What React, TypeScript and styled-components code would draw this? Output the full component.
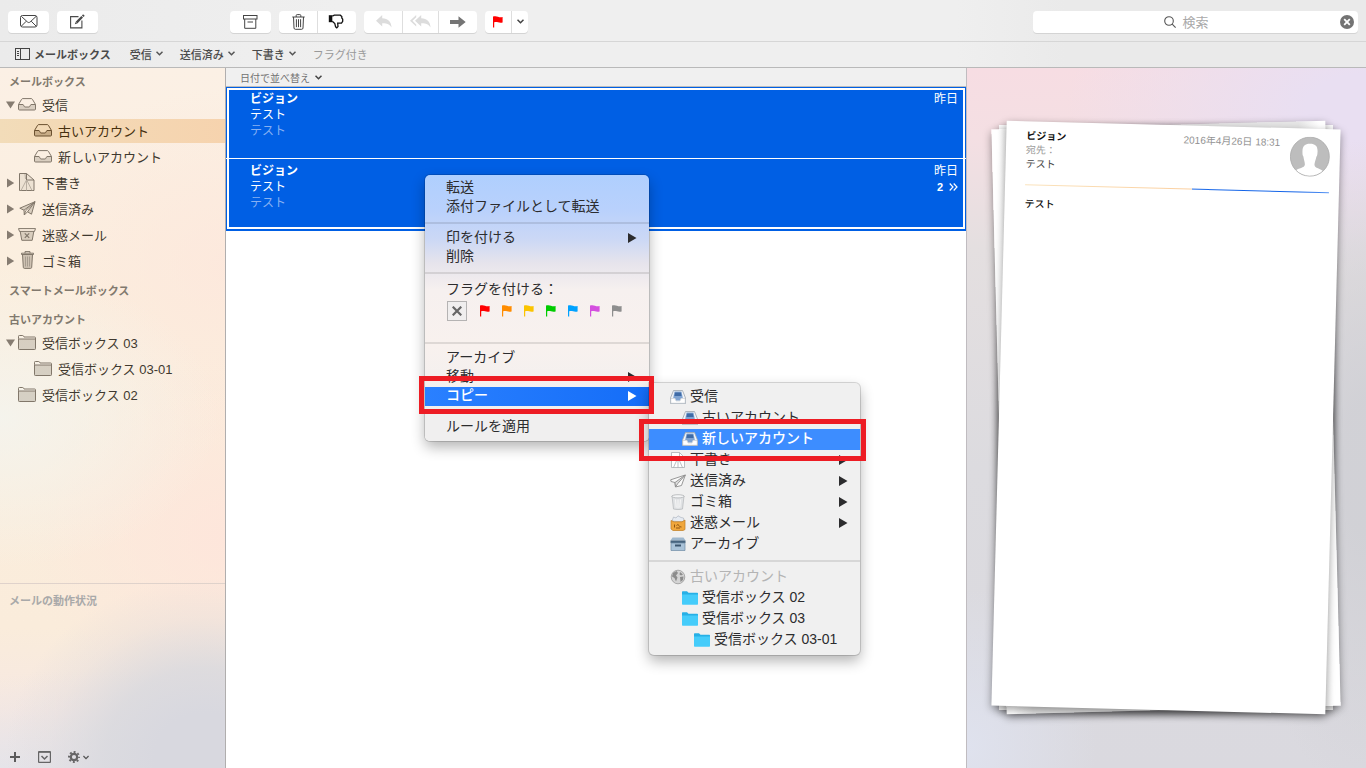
import React from 'react';
import styled, { createGlobalStyle, css } from 'styled-components';

const GlobalStyle = createGlobalStyle`
  *, *::before, *::after { box-sizing: border-box; }
  body {
    margin: 0;
    font-family: "Liberation Sans", "Noto Sans CJK JP", sans-serif;
    font-size: 13px;
    color: #333;
  }
  button {
    margin: 0;
    padding: 0;
    border: 0;
    background: none;
    font: inherit;
    color: inherit;
    text-align: left;
    white-space: nowrap;
  }
  ul { margin: 0; padding: 0; list-style: none; }
  svg { display: block; flex: none; }
`;

/* ---------- window ---------- */

const Window = styled.div`
  position: relative;
  display: flex;
  flex-direction: column;
  min-height: 100vh;
  overflow: hidden;
  background: #fff;
`;

const Toolbar = styled.header`
  display: flex;
  align-items: center;
  height: 42px;
  padding: 2px 8px 0;
  gap: 8px;
  background: linear-gradient(90deg, #ebebeb, #efefef 25%, #efefef 70%, #eaeaea 78%);
  border-bottom: 1px solid #d6d6d6;
`;

const ToolGroup = styled.div<{ $push?: number }>`
  display: flex;
  height: 22px;
  margin-left: ${(p) => p.$push ?? 0}px;
  background: #fff;
  border-radius: 4px;
  box-shadow: 0 1px 0 #d4d4d4;
`;

const ToolButton = styled.button<{ $w: number }>`
  display: flex;
  align-items: center;
  justify-content: center;
  width: ${(p) => p.$w}px;
  & + & { border-left: 1px solid #dedede; }
`;

const Search = styled.form`
  display: flex;
  align-items: center;
  justify-content: center;
  width: 325px;
  height: 22px;
  margin-left: auto;
  padding-right: 4px;
  background: #fff;
  border-radius: 4px;
  box-shadow: 0 1px 0 #d4d4d4;
`;

const SearchLabel = styled.label`
  display: flex;
  flex: 1;
  align-items: center;
  justify-content: center;
  gap: 6px;
`;

const SearchInput = styled.input`
  field-sizing: content;
  width: auto;
  min-width: 26px;
  height: 20px;
  padding: 0;
  border: 0;
  outline: 0;
  background: transparent;
  font: inherit;
  &::placeholder { color: #a9a9a9; opacity: 1; }
`;

const FavoritesBar = styled.nav`
  display: flex;
  align-items: center;
  height: 26px;
  padding: 0 15px 2px;
  background: linear-gradient(90deg, #ebebeb, #efefef 25%, #efefef 70%, #eaeaea 78%);
  border-bottom: 1px solid #b9b9b9;
  font-size: 11px;
`;

const Favorite = styled.button<{ $muted?: boolean; $strong?: boolean }>`
  display: flex;
  align-items: center;
  gap: 4px;
  margin-right: ${(p) => (p.$strong ? 19 : 17)}px;
  color: ${(p) => (p.$muted ? '#999' : '#4a4a4a')};
  font-weight: ${(p) => (p.$strong ? 700 : p.$muted ? 400 : 500)};
`;

const Columns = styled.div`
  display: flex;
  flex: 1;
`;

/* ---------- sidebar ---------- */

const Sidebar = styled.aside`
  display: flex;
  flex: none;
  flex-direction: column;
  width: 226px;
  border-right: 1px solid #b0aeae;
  background:
    radial-gradient(ellipse 200px 180px at 205px 690px, rgba(216, 216, 223, 1) 25%, rgba(217, 217, 222, 0.85) 50%, rgba(222, 218, 220, 0.3) 78%, rgba(226, 220, 220, 0) 100%),
    radial-gradient(ellipse 240px 130px at 90px 730px, rgba(226, 226, 232, 0.9), rgba(226, 226, 232, 0) 100%),
    radial-gradient(ellipse 220px 150px at 0 350px, rgba(244, 244, 238, 0.9), rgba(246, 244, 240, 0) 100%),
    radial-gradient(ellipse 200px 180px at 226px 470px, rgba(254, 229, 219, 0.9), rgba(253, 231, 220, 0) 100%),
    radial-gradient(ellipse 200px 180px at 226px 200px, rgba(253, 231, 220, 0.8), rgba(253, 231, 220, 0) 100%),
    linear-gradient(180deg, #fbf0e5, #fbeedd 35%, #faecdb 80%, #f6e8e2 92%, #e9e6ea);
`;

const SidebarBody = styled.div`
  flex: 1;
  padding-top: 3px;
`;

const SidebarSection = styled.section`
  & + & { margin-top: 7px; }
`;

const SectionTitle = styled.h2<{ $dim?: boolean }>`
  margin: 0;
  padding-left: 9px;
  font-size: 11px;
  font-weight: 700;
  line-height: 22px;
  color: ${(p) => (p.$dim ? '#a9a9a9' : '#81796e')};
`;

const MailboxList = styled.ul`
  display: flex;
  flex-direction: column;
  gap: 2px;
`;

const MailboxRow = styled.button<{ $nested?: boolean; $selected?: boolean }>`
  display: flex;
  align-items: center;
  width: 100%;
  height: 24px;
  padding: 0 0 2px ${(p) => (p.$nested ? 22 : 6)}px;
  color: ${(p) => (p.$selected ? '#46300f' : '#3f392f')};
  background: ${(p) => (p.$selected ? 'linear-gradient(90deg, #f2dcb9, #f6d3ae)' : 'none')};
`;

const Disclosure = styled.span`
  width: 12px;
  padding-top: 2px;
`;

const MailboxIcon = styled.span`
  display: flex;
  justify-content: center;
  width: 18px;
  margin-right: 6px;
`;

const StatusPane = styled.footer`
  display: flex;
  flex-direction: column;
  justify-content: space-between;
  height: 185px;
  padding-top: 6px;
  border-top: 1px solid #dfd2cb;
`;

const StatusActions = styled.div`
  display: flex;
  align-items: center;
  height: 22px;
  padding-left: 10px;
  gap: 17px;
`;

const StatusButton = styled.button`
  display: flex;
  align-items: center;
  gap: 3px;
`;

/* ---------- message list ---------- */

const MessagePane = styled.main`
  flex: 1;
  min-width: 0;
  background: #fff;
`;

const SortBar = styled.div`
  display: flex;
  align-items: center;
  height: 19px;
  padding-left: 14px;
  background: #f0f0f0;
  border-bottom: 1px solid #bdbdbd;
`;

const SortButton = styled.button`
  display: flex;
  align-items: center;
  gap: 5px;
  font-size: 10px;
  color: #707070;
`;

const MessageList = styled.ul`
  position: relative;
  background: #005fe4;
  &::after {
    content: "";
    position: absolute;
    inset: 1px 1px 2px;
    border: 2px solid #fff;
    pointer-events: none;
  }
`;

const Message = styled.li`
  display: flex;
  justify-content: space-between;
  height: 72px;
  padding: 4px 8px 0 24px;
  font-size: 12px;
  line-height: 16px;
  color: #fff;
  &:first-child { border-bottom: 1px solid #fff; }
`;

const MessageLine = styled.div<{ $bold?: boolean; $dim?: boolean }>`
  font-weight: ${(p) => (p.$bold ? 700 : 400)};
  color: ${(p) => (p.$dim ? '#86b0f2' : '#fff')};
`;

const MessageMeta = styled.div`
  text-align: right;
`;

const ThreadCount = styled.button`
  display: inline-flex;
  align-items: center;
  gap: 6px;
  font-size: 11px;
  font-weight: 700;
`;

/* ---------- preview ---------- */

const PreviewPane = styled.section`
  display: grid;
  flex: none;
  width: 400px;
  padding: 57px 33px 58px 32px;
  border-left: 1px solid #c0bcc0;
  background:
    radial-gradient(ellipse 130px 330px at 399px 400px, rgba(208, 208, 213, 0.9) 20%, rgba(210, 210, 214, 0) 100%),
    radial-gradient(ellipse 130px 160px at 0 680px, rgba(223, 226, 238, 1), rgba(223, 226, 238, 0)),
    radial-gradient(ellipse 300px 170px at 399px 40px, rgba(233, 223, 242, 1) 20%, rgba(233, 223, 242, 0) 100%),
    linear-gradient(180deg, #f7dde3 0, #f4dfe3 70px, #e4dfe0 180px, #dcdbdf 400px, #dad9df 100%);
`;

const Sheet = styled.article<{ $turn?: number }>`
  grid-area: 1 / 1;
  padding: 8px 10px 0 20px;
  background: #fff;
  box-shadow: 0 3px 8px rgba(0, 0, 0, 0.4);
  transform: rotate(${(p) => p.$turn ?? 0}deg);
  font-size: 10px;
`;

const BackSheet = styled(Sheet).attrs({ 'aria-hidden': true })`
  background: linear-gradient(90deg, #fff 2%, #e6e6e6 8%, #e6e6e6 92%, #fff 98%);
`;

const SheetHeader = styled.div`
  display: flex;
  height: 56px;
  border-bottom: 1px solid;
  border-image: linear-gradient(90deg, #fae3bd, #fbcf9f 55%, #1565e8 55%, #1565e8 90%, #5b97f4) 1;
`;

const SheetFields = styled.div`
  flex: 1;
  line-height: 14px;
`;

const FieldLine = styled.div<{ $tone: string; $bold?: boolean }>`
  color: ${(p) => p.$tone};
  font-weight: ${(p) => (p.$bold ? 700 : 400)};
`;

const SheetDate = styled.time`
  margin-right: 10px;
  color: #929292;
  line-height: 14px;
`;

const SheetText = styled.p`
  margin: 12px 0 0;
  color: #111;
  font-weight: 500;
  line-height: 14px;
`;

/* ---------- menus ---------- */

const menuSurface = css`
  position: absolute;
  padding: 4px 0;
  font-size: 14px;
  color: #2c2c2e;
  box-shadow: 0 0 0 1px rgba(0, 0, 0, 0.14), 0 6px 14px rgba(0, 0, 0, 0.3);
`;

const ContextMenu = styled.div`
  ${menuSurface}
  left: 425px;
  top: 175px;
  width: 224px;
  border-radius: 5px;
  background: linear-gradient(180deg, #afcffe 0, #b9d1fc 35px, #ccd8f5 65px, #e6e4ec 88px, #f6f0ef 115px, #f8f1ee 170px, #f0efef 240px);
`;

const Submenu = styled.div`
  ${menuSurface}
  left: 649px;
  top: 383px;
  width: 211px;
  border-radius: 0 5px 5px 5px;
  background: #f0f0f0;
`;

const MenuItem = styled.button<{ $on?: boolean; $level?: number; $sub?: boolean; $off?: boolean }>`
  display: flex;
  align-items: center;
  width: 100%;
  height: ${(p) => (p.$sub ? 21 : 19)}px;
  padding: 0 12px 2px ${(p) => 21 + (p.$level ?? 0) * 12}px;
  gap: 4px;
  line-height: 19px;
  ${(p) => p.$off && css`color: #b4b4b4;`}
  ${(p) => p.$on && css`
    color: #fff;
    font-weight: 500;
    background: ${p.$sub ? '#3d8dff' : 'linear-gradient(90deg, #2a80ff, #146df8)'};
  `}
  & > span { flex: 1; }
`;

const MenuRule = styled.hr`
  height: 2px;
  margin: 5px 0;
  border: 0;
  background: rgba(0, 0, 0, 0.1);
`;

const FlagLabel = styled.div`
  height: 22px;
  padding-left: 21px;
  line-height: 20px;
`;

const FlagRow = styled.div`
  display: flex;
  align-items: center;
  height: 36px;
  padding: 0 0 16px 22px;
`;

const NoFlag = styled.button`
  display: flex;
  align-items: center;
  justify-content: center;
  width: 20px;
  height: 20px;
  margin-right: 7px;
  border: 1px solid #b5b3b3;
  background: #f0eeee;
`;

const FlagButton = styled.button`
  display: flex;
  justify-content: center;
  width: 22px;
`;

const Callout = styled.div<{ $x: number; $y: number; $w: number; $h: number }>`
  position: absolute;
  left: ${(p) => p.$x}px;
  top: ${(p) => p.$y}px;
  width: ${(p) => p.$w}px;
  height: ${(p) => p.$h}px;
  border: 5px solid #ed1c24;
  pointer-events: none;
`;

/* ---------- icons ---------- */

const Chevron = ({ color = '#555', w = 7 }: { color?: string; w?: number }) => (
  <svg width={w} height="5" viewBox="0 0 7 5" fill="none" stroke={color} strokeWidth="1.5">
    <path d="M0.5 0.8 3.5 3.8 6.5 0.8" />
  </svg>
);

const Flag = ({ color }: { color: string }) => (
  <svg width="10" height="12" viewBox="0 0 10 12" fill={color}>
    <path d="M0 0.6C2 0 3.5 0.2 5 0.8 6.500 1.400 8 1.500 9.600 1V6.400C8 7 6.500 6.800 5 6.300 3.800 5.900 2.500 5.800 1.200 6.300V11.500H0Z" />
  </svg>
);

const Arrow = ({ color = '#2c2c2e' }: { color?: string }) => (
  <svg width="9" height="10" viewBox="0 0 9 10" fill={color}>
    <path d="M0 0 8.500 5 0 10Z" />
  </svg>
);

const EnvelopeIcon = () => (
  <svg width="18" height="13" viewBox="0 0 18 13" fill="none" stroke="#444" strokeWidth="1">
    <rect x="0.5" y="0.5" width="16.500" height="11.500" rx="2" />
    <path d="M1.500 1.500 7.500 7C8.300 7.700 9.300 7.700 10.100 7L16 1.500M1.500 11 6.300 6.200M16 11 11.200 6.200" />
  </svg>
);

const ComposeIcon = () => (
  <svg width="15" height="15" viewBox="0 0 15 15" fill="none" stroke="#4a4a4a" strokeWidth="1.100">
    <path d="M8.500 2.600H0.600V13.900H11.900V6.500" />
    <path d="M6.500 8.600 12.200 2.700" strokeWidth="2.300" />
    <path d="M12.700 2.200 13.900 1" strokeWidth="2.300" />
    <path d="M4.800 10.300 5.600 7.900 7.200 9.500Z" fill="#4a4a4a" stroke="none" />
  </svg>
);

const ArchiveIcon = () => (
  <svg width="15" height="14" viewBox="0 0 15 14" fill="none" stroke="#444" strokeWidth="1">
    <rect x="0.500" y="0.500" width="13.500" height="3.500" />
    <path d="M1.700 4V13.300H12.800V4M4.500 7H10" />
  </svg>
);

const TrashIcon = () => (
  <svg width="13" height="16" viewBox="0 0 13 16" fill="none" stroke="#444" strokeWidth="1">
    <path d="M0.300 3H12.700M4.200 3V1.500Q4.200 0.600 5.200 0.600H7.800Q8.800 0.600 8.800 1.500V3M1.500 3 2 14Q2.100 15.300 3.300 15.300H9.700Q10.900 15.300 11 14L11.500 3M4.400 5.200V13.200M6.500 5.200V13.200M8.600 5.200V13.200" />
  </svg>
);

const ThumbDownIcon = () => (
  <svg width="18" height="15" viewBox="0 0 18 15" fill="none" stroke="#111" strokeWidth="1.300">
    <path d="M0.800 1.200H4.300V8.200H0.800Z" fill="#111" stroke="none" />
    <path d="M4.300 2.200 6.300 1.200H12.300L13.800 2.600V4L14.700 5.200V7.400L13.500 9.200H9.700L10 12.600 8.800 13.800 7.600 12.800 6.800 9.600 4.300 7.200" />
  </svg>
);

const ReplyIcon = ({ all }: { all?: boolean }) => (
  <svg width={all ? 21 : 18} height="13" viewBox={all ? '-5 0 21 13' : '-2 0 18 13'} fill="#dcdcdc">
    <path d="M0 5.800 6.200 0V3.300C12 3.500 15.200 6.500 15.600 12.600 13.500 9.200 11 8.200 6.200 8.300V11.600Z" />
    {all && <path d="M-5 5.800 1.200 0V2.200L-2.500 5.800 1.200 9.400V11.600Z" />}
  </svg>
);

const ForwardIcon = () => (
  <svg width="16" height="12" viewBox="0 0 16 12" fill="#757575">
    <path d="M0 4H8.500V0.200L15.700 6 8.500 11.800V8H0Z" />
  </svg>
);

const SearchIcon = () => (
  <svg width="12" height="12" viewBox="0 0 12 12" fill="none" stroke="#555" strokeWidth="1.100">
    <circle cx="5" cy="5" r="4.300" />
    <path d="M8.200 8.200 11.600 11.600" />
  </svg>
);

const ClearIcon = () => (
  <svg width="14" height="14" viewBox="0 0 14 14">
    <circle cx="7" cy="7" r="7" fill="#737373" />
    <path d="M4.200 4.200 9.800 9.800M9.800 4.200 4.200 9.800" stroke="#fff" strokeWidth="1.800" />
  </svg>
);

const PanelIcon = () => (
  <svg width="15" height="12" viewBox="0 0 15 12" fill="none" stroke="#444" strokeWidth="1">
    <rect x="0.500" y="0.500" width="14" height="11" />
    <path d="M5.500 0.500V11.500M2 3.500H4M2 5.500H4M2 7.500H4" />
  </svg>
);

const Triangle = ({ open }: { open?: boolean }) => (
  <svg width="10" height="10" viewBox="0 0 10 10" fill="#867c71">
    <path d={open ? 'M0 1.500H9L4.500 8.500Z' : 'M1 0.500 8.200 5 1 9.500Z'} />
  </svg>
);

const line = '#81776a';
const shade = 'rgba(140, 128, 112, 0.3)';

const InboxIcon = ({ dark }: { dark?: boolean }) => (
  <svg width="18" height="13" viewBox="0 0 18 13" fill="none" stroke={dark ? '#6b5130' : line} strokeWidth="1">
    <path
      d="M0.500 6.500H5C5.800 6.500 5.800 9 7 9H11C12.200 9 12.200 6.500 13 6.500H17.500V11Q17.500 12 16.500 12H1.500Q0.500 12 0.500 11Z"
      fill={dark ? 'rgba(120, 90, 50, 0.35)' : shade}
    />
    <path d="M0.500 6.500 3.600 1.300Q4 0.600 4.800 0.600H13.200Q14 0.600 14.400 1.300L17.500 6.500" />
  </svg>
);

const DraftIcon = () => (
  <svg width="16" height="18" viewBox="0 0 16 18" fill="none" stroke={line} strokeWidth="1">
    <path d="M0.500 0.500H7.500L15 7V17.500H0.500Z" fill="rgba(140, 128, 112, 0.12)" />
    <path d="M7.500 0.500V7H15" />
    <path d="M7.500 7 2 17.500M7.500 7V17.500M8 7.500 13 17.500M6 1 6.500 6" stroke="#b9afa2" />
  </svg>
);

const PlaneIcon = () => (
  <svg width="17" height="15" viewBox="0 0 17 15" fill="none" stroke={line} strokeWidth="1" strokeLinejoin="round">
    <path d="M16 0.700 0.800 7.200 5 9.200 16 0.700 12.500 13.200 8.500 10.800 16 0.700" fill={shade} />
    <path d="M5 9.200 5.300 14 8.500 10.800M5.300 14 6.500 9.900 16 0.700" />
  </svg>
);

const JunkIcon = () => (
  <svg width="18" height="13" viewBox="0 0 18 13" fill="none" stroke={line} strokeWidth="1">
    <path d="M0.500 0.600H17.500L16.500 3.400H1.500Z" />
    <path d="M2.200 3.400 3.800 12.300H14.200L15.800 3.400" fill={shade} />
    <path d="M6.800 5.400 11.200 9.800M11.200 5.400 6.800 9.800" strokeWidth="1.200" />
  </svg>
);

const BinIcon = () => (
  <svg width="13" height="18" viewBox="0 0 13 18" fill="none" stroke={line} strokeWidth="1">
    <path d="M1.500 3.500 2.300 16.300Q2.400 17.400 3.500 17.400H9.500Q10.600 17.400 10.700 16.300L11.500 3.500" fill="rgba(140, 128, 112, 0.4)" />
    <path d="M0.500 3.500V2.200H12.500V3.500ZM4 2.200V0.600H9V2.200" />
    <path d="M4.500 5.500V15.500M6.500 5.500V15.500M8.500 5.500V15.500" stroke="#a79d90" />
  </svg>
);

const FolderIcon = () => (
  <svg width="18" height="15" viewBox="0 0 18 15" fill="none" stroke={line} strokeWidth="1">
    <path d="M0.500 3.800V1.300Q0.500 0.500 1.300 0.500H4.700Q5.300 0.500 5.600 1.200L6 2H16.700Q17.500 2 17.500 2.800V4" />
    <path d="M0.500 4H17.500V13.700Q17.500 14.500 16.700 14.500H1.300Q0.500 14.500 0.500 13.700Z" fill={shade} />
  </svg>
);

const PlusIcon = () => (
  <svg width="11" height="11" viewBox="0 0 11 11" stroke="#5c5b5c" strokeWidth="2">
    <path d="M5 0V10M0 5H10" />
  </svg>
);

const ActivityIcon = () => (
  <svg width="13" height="12" viewBox="0 0 13 12" fill="none" stroke="#666566" strokeWidth="1.200">
    <rect x="0.600" y="0.600" width="11.800" height="10.800" rx="0.500" />
    <path d="M0.600 1.200H12.400" />
    <path d="M3.500 5 6.500 8 9.500 5" strokeWidth="1.500" />
  </svg>
);

const GearIcon = () => (
  <svg width="12" height="12" viewBox="0 0 12 12" fill="none" stroke="#666566">
    <circle cx="6" cy="6" r="3.200" strokeWidth="2.200" />
    <circle cx="6" cy="6" r="5" strokeWidth="2" strokeDasharray="1.900 2.027" strokeDashoffset="0.950" />
  </svg>
);

const TrayIcon = () => (
  <svg width="16" height="16" viewBox="0 0 16 16">
    <path d="M3.500 1.500H12.500L15.500 9V14.500H0.500V9Z" fill="#f2f4f7" stroke="#9aa3ad" strokeWidth="0.800" />
    <path d="M4.500 2.500H11.500L12.800 9H11L10 11.500H6L5 9H3.200Z" fill="#7fa3d1" />
    <path d="M5.200 3.500H10.800L11.600 7H4.400Z" fill="#3f6ba6" />
    <path d="M0.800 9.500H4.800L6 12H10L11.200 9.500H15.200V14.200H0.800Z" fill="#fff" stroke="#b7bec6" strokeWidth="0.500" />
  </svg>
);

const MenuDraftIcon = () => (
  <svg width="16" height="16" viewBox="0 0 16 16" stroke="#a9aeb4" strokeWidth="0.800" fill="none">
    <path d="M1.500 0.500H9.500L14.500 5.500V15.500H1.500Z" fill="#fff" />
    <path d="M9.500 0.500V5.500H14.500M8 5.500 3.500 15.500M8 5.500V15.500M8 5.500 12.500 15.500" />
  </svg>
);

const MenuPlaneIcon = () => (
  <svg width="16" height="16" viewBox="0 0 16 16" fill="#fafafa" stroke="#8c8c8c" strokeWidth="0.900" strokeLinejoin="round">
    <path d="M15.300 2 0.700 6.800 1 8.500 5 9.500 5.500 14 11.500 12.500Z" />
    <path d="M15.300 2 5 9.500 5.500 14 7.800 10.500Z" fill="#dedede" />
  </svg>
);

const MenuBinIcon = () => (
  <svg width="16" height="16" viewBox="0 0 16 16">
    <path d="M2 2 3.500 15Q8 16.300 12.500 15L14 2Z" fill="#e0e2e4" stroke="#b2b5b8" strokeWidth="0.700" />
    <ellipse cx="8" cy="2.300" rx="6.200" ry="1.600" fill="#f4f5f6" stroke="#a8abae" strokeWidth="0.700" />
    <path d="M5.500 5.500 6.200 13.500M8 5.500V14M10.500 5.500 9.800 13.500" stroke="#f8f8f8" strokeWidth="0.900" />
  </svg>
);

const MenuJunkIcon = () => (
  <svg width="16" height="16" viewBox="0 0 16 16">
    <path d="M2 6 3.500 2 6 3 8 0.800 11 2.500 13.500 3 14 7Z" fill="#e6ebf2" stroke="#a5adb8" strokeWidth="0.600" />
    <path d="M1 5.500 4 6.800H12L15 5V14.500L13 15.500H3L1 14Z" fill="#f0a73c" stroke="#bf7b20" strokeWidth="0.700" />
    <path d="M4.500 9.500V12.500M6.500 10.500Q8 8.500 9 10.500T11.500 12M6 13H10" stroke="#8f5510" strokeWidth="1" fill="none" />
  </svg>
);

const MenuArchiveIcon = () => (
  <svg width="16" height="16" viewBox="0 0 16 16">
    <path d="M2.500 1.500H13.500L15.500 4.500H0.500Z" fill="#9fb8ce" />
    <path d="M0.500 4.500H15.500V7H0.500Z" fill="#47647f" />
    <path d="M1 7H15V14.500H1Z" fill="#a9c2d8" stroke="#6f8ba5" strokeWidth="0.700" />
    <path d="M5 8.500H11V10.500H5Z" fill="#3c566f" />
  </svg>
);

const GlobeIcon = () => (
  <svg width="16" height="16" viewBox="0 0 16 16">
    <circle cx="8" cy="8" r="6.800" fill="#d4d4d4" stroke="#8f8f8f" strokeWidth="0.700" />
    <path d="M3 4 6.500 2 8 4 6 6.500 7.500 8.500 6 12.500 4.500 9 2 7.500ZM10 3 13 5.500 11 6.500 9.500 5.500ZM10 8 13.500 7.500 13 11 10.500 13Z" fill="#8c8c8c" />
  </svg>
);

const BlueFolderIcon = () => (
  <svg width="16" height="14" viewBox="0 0 16 14">
    <path d="M0 1Q0 0.300 0.700 0.300H5L6.500 1.800H15.300Q16 1.800 16 2.500V12.500H0Z" fill="#27b0e6" />
    <path d="M0 3.500H16V13Q16 13.700 15.300 13.700H0.700Q0 13.700 0 13Z" fill="#45ccfa" />
  </svg>
);

const Avatar = () => (
  <svg width="40" height="40" viewBox="0 0 40 40">
    <defs>
      <clipPath id="avatar-disc"><circle cx="20" cy="20" r="19.500" /></clipPath>
    </defs>
    <circle cx="20" cy="20" r="19.500" fill="#bdbdbd" />
    <path
      clipPath="url(#avatar-disc)"
      fill="#fff"
      d="M12.500 16C12 9 15 7 20 7S28 9 27.500 16C27.500 17.500 27.300 19 26.500 20 26 23.500 24.800 25.500 24.800 28 25 32 31 31 34.500 35L34 40H6L5.500 35C9 31 15 32 15.200 28 15.200 25.500 14 23.500 13.500 20 12.700 19 12.500 17.500 12.500 16Z"
    />
    <circle cx="20" cy="20" r="19.500" fill="none" stroke="#aaa" strokeWidth="0.800" />
  </svg>
);

/* ---------- data ---------- */

type Mailbox = {
  name: string;
  icon: React.ReactNode;
  nested?: boolean;
  open?: boolean;
  leaf?: boolean;
  selected?: boolean;
};

const sections: { title: string; boxes: Mailbox[] }[] = [
  {
    title: 'メールボックス',
    boxes: [
      { name: '受信', icon: <InboxIcon />, open: true },
      { name: '古いアカウント', icon: <InboxIcon dark />, nested: true, leaf: true, selected: true },
      { name: '新しいアカウント', icon: <InboxIcon />, nested: true, leaf: true },
      { name: '下書き', icon: <DraftIcon /> },
      { name: '送信済み', icon: <PlaneIcon /> },
      { name: '迷惑メール', icon: <JunkIcon /> },
      { name: 'ゴミ箱', icon: <BinIcon /> },
    ],
  },
  { title: 'スマートメールボックス', boxes: [] },
  {
    title: '古いアカウント',
    boxes: [
      { name: '受信ボックス 03', icon: <FolderIcon />, open: true },
      { name: '受信ボックス 03-01', icon: <FolderIcon />, nested: true, leaf: true },
      { name: '受信ボックス 02', icon: <FolderIcon />, leaf: true },
    ],
  },
];

type Target = {
  name: string;
  icon: React.ReactNode;
  level?: number;
  more?: boolean;
  on?: boolean;
  off?: boolean;
};

const localTargets: Target[] = [
  { name: '受信', icon: <TrayIcon /> },
  { name: '古いアカウント', icon: <TrayIcon />, level: 1 },
  { name: '新しいアカウント', icon: <TrayIcon />, level: 1, on: true },
  { name: '下書き', icon: <MenuDraftIcon />, more: true },
  { name: '送信済み', icon: <MenuPlaneIcon />, more: true },
  { name: 'ゴミ箱', icon: <MenuBinIcon />, more: true },
  { name: '迷惑メール', icon: <MenuJunkIcon />, more: true },
  { name: 'アーカイブ', icon: <MenuArchiveIcon /> },
];

const accountTargets: Target[] = [
  { name: '古いアカウント', icon: <GlobeIcon />, off: true },
  { name: '受信ボックス 02', icon: <BlueFolderIcon />, level: 1 },
  { name: '受信ボックス 03', icon: <BlueFolderIcon />, level: 1 },
  { name: '受信ボックス 03-01', icon: <BlueFolderIcon />, level: 2 },
];

const flagColors = [
  ['レッド', '#ff0000'],
  ['オレンジ', '#ff8c00'],
  ['イエロー', '#fbc400'],
  ['グリーン', '#00cc00'],
  ['ブルー', '#00a2ff'],
  ['パープル', '#d44fdf'],
  ['グレイ', '#8e8e8e'],
];

const TargetItems = ({ items }: { items: Target[] }) => (
  <>
    {items.map((t) => (
      <MenuItem key={t.name} role="menuitem" $sub $level={t.level} $on={t.on} $off={t.off} disabled={t.off}>
        {t.icon}
        <span>{t.name}</span>
        {t.more && <Arrow />}
      </MenuItem>
    ))}
  </>
);

export default function App() {
  return (
    <Window>
      <GlobalStyle />
      <Toolbar>
        <ToolGroup><ToolButton $w={41} aria-label="受信"><EnvelopeIcon /></ToolButton></ToolGroup>
        <ToolGroup><ToolButton $w={41} aria-label="新規メッセージ"><ComposeIcon /></ToolButton></ToolGroup>
        <ToolGroup $push={124}><ToolButton $w={41} aria-label="アーカイブ"><ArchiveIcon /></ToolButton></ToolGroup>
        <ToolGroup>
          <ToolButton $w={38} aria-label="削除"><TrashIcon /></ToolButton>
          <ToolButton $w={39} aria-label="迷惑メール"><ThumbDownIcon /></ToolButton>
        </ToolGroup>
        <ToolGroup>
          <ToolButton $w={38} aria-label="返信"><ReplyIcon /></ToolButton>
          <ToolButton $w={36} aria-label="全員に返信"><ReplyIcon all /></ToolButton>
          <ToolButton $w={39} aria-label="転送"><ForwardIcon /></ToolButton>
        </ToolGroup>
        <ToolGroup>
          <ToolButton $w={26} aria-label="フラグ"><Flag color="#ff0000" /></ToolButton>
          <ToolButton $w={17} aria-label="フラグの種類"><Chevron color="#444" /></ToolButton>
        </ToolGroup>
        <Search role="search">
          <SearchLabel>
            <SearchIcon />
            <SearchInput type="text" placeholder="検索" aria-label="検索" />
          </SearchLabel>
          <button type="button" aria-label="消去"><ClearIcon /></button>
        </Search>
      </Toolbar>

      <FavoritesBar>
        <Favorite $strong><PanelIcon />メールボックス</Favorite>
        <Favorite>受信<Chevron /></Favorite>
        <Favorite>送信済み<Chevron /></Favorite>
        <Favorite>下書き<Chevron /></Favorite>
        <Favorite $muted>フラグ付き</Favorite>
      </FavoritesBar>

      <Columns>
        <Sidebar>
          <SidebarBody>
            {sections.map((s) => (
              <SidebarSection key={s.title}>
                <SectionTitle>{s.title}</SectionTitle>
                <MailboxList>
                  {s.boxes.map((b) => (
                    <li key={b.name}>
                      <MailboxRow $nested={b.nested} $selected={b.selected}>
                        <Disclosure>{!b.leaf && <Triangle open={b.open} />}</Disclosure>
                        <MailboxIcon>{b.icon}</MailboxIcon>
                        {b.name}
                      </MailboxRow>
                    </li>
                  ))}
                </MailboxList>
              </SidebarSection>
            ))}
          </SidebarBody>
          <StatusPane>
            <SectionTitle $dim>メールの動作状況</SectionTitle>
            <StatusActions>
              <StatusButton aria-label="追加"><PlusIcon /></StatusButton>
              <StatusButton aria-label="動作状況"><ActivityIcon /></StatusButton>
              <StatusButton aria-label="設定"><GearIcon /><Chevron w={6} /></StatusButton>
            </StatusActions>
          </StatusPane>
        </Sidebar>

        <MessagePane>
          <SortBar><SortButton>日付で並べ替え<Chevron color="#444" /></SortButton></SortBar>
          <MessageList>
            <Message>
              <div>
                <MessageLine $bold>ビジョン</MessageLine>
                <MessageLine>テスト</MessageLine>
                <MessageLine $dim>テスト</MessageLine>
              </div>
              <MessageMeta>昨日</MessageMeta>
            </Message>
            <Message>
              <div>
                <MessageLine $bold>ビジョン</MessageLine>
                <MessageLine>テスト</MessageLine>
                <MessageLine $dim>テスト</MessageLine>
              </div>
              <MessageMeta>
                <div>昨日</div>
                <ThreadCount>
                  2
                  <svg width="9" height="8" viewBox="0 0 9 8" fill="none" stroke="#fff" strokeWidth="1.200">
                    <path d="M0.700 0.500 4 4 0.700 7.500M4.700 0.500 8 4 4.700 7.500" />
                  </svg>
                </ThreadCount>
              </MessageMeta>
            </Message>
          </MessageList>
        </MessagePane>

        <PreviewPane>
          <BackSheet />
          <BackSheet $turn={-1.5} />
          <Sheet $turn={1.5}>
            <SheetHeader>
              <SheetFields>
                <FieldLine $tone="#111" $bold>ビジョン</FieldLine>
                <FieldLine $tone="#999">宛先：</FieldLine>
                <FieldLine $tone="#444">テスト</FieldLine>
              </SheetFields>
              <SheetDate dateTime="2016-04-26T18:31">2016年4月26日 18:31</SheetDate>
              <Avatar />
            </SheetHeader>
            <SheetText>テスト</SheetText>
          </Sheet>
        </PreviewPane>
      </Columns>

      <ContextMenu role="menu">
        <MenuItem role="menuitem"><span>転送</span></MenuItem>
        <MenuItem role="menuitem"><span>添付ファイルとして転送</span></MenuItem>
        <MenuRule />
        <MenuItem role="menuitem"><span>印を付ける</span><Arrow /></MenuItem>
        <MenuItem role="menuitem"><span>削除</span></MenuItem>
        <MenuRule />
        <FlagLabel>フラグを付ける：</FlagLabel>
        <FlagRow>
          <NoFlag aria-label="フラグなし">
            <svg width="10" height="10" viewBox="0 0 10 10" stroke="#666" strokeWidth="2.200">
              <path d="M0.700 0.700 9.300 9.300M9.300 0.700 0.700 9.300" />
            </svg>
          </NoFlag>
          {flagColors.map(([name, color]) => (
            <FlagButton key={name} aria-label={name}><Flag color={color} /></FlagButton>
          ))}
        </FlagRow>
        <MenuRule />
        <MenuItem role="menuitem"><span>アーカイブ</span></MenuItem>
        <MenuItem role="menuitem"><span>移動</span><Arrow /></MenuItem>
        <MenuItem role="menuitem" $on><span>コピー</span><Arrow color="#fff" /></MenuItem>
        <MenuRule />
        <MenuItem role="menuitem"><span>ルールを適用</span></MenuItem>
      </ContextMenu>

      <Submenu role="menu">
        <TargetItems items={localTargets} />
        <MenuRule />
        <TargetItems items={accountTargets} />
      </Submenu>

      <Callout $x={419} $y={376} $w={235} $h={38} />
      <Callout $x={639} $y={419} $w={227} $h={42} />
    </Window>
  );
}
